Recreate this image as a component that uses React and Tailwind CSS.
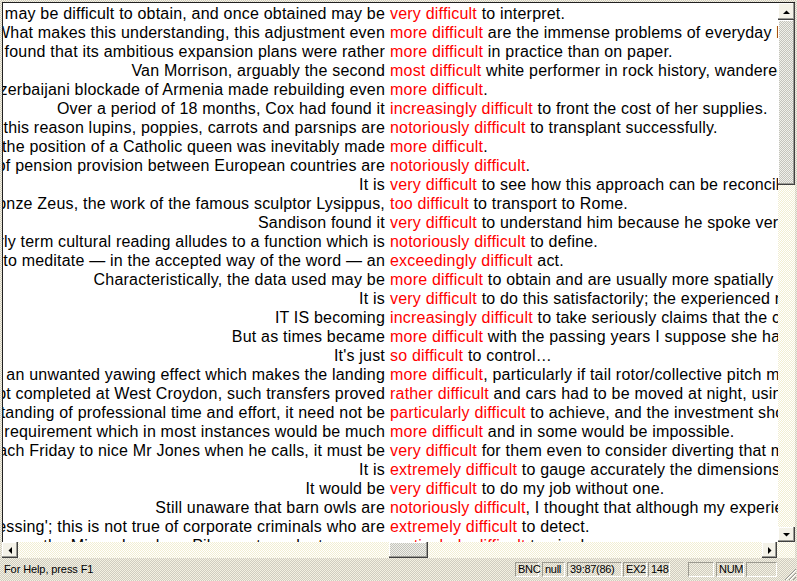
const ROWS = [
  ['tions may be difficult to obtain, and once obtained may be', 'very difficult', ' to interpret.'],
  ['What makes this understanding, this adjustment even', 'more difficult', ' are the immense problems of everyday life'],
  ['It found that its ambitious expansion plans were rather', 'more difficult', ' in practice than on paper.'],
  ['Van Morrison, arguably the second', 'most difficult', ' white performer in rock history, wandered'],
  ['The Azerbaijani blockade of Armenia made rebuilding even', 'more difficult', '.'],
  ['Over a period of 18 months, Cox had found it', 'increasingly difficult', ' to front the cost of her supplies.'],
  ['For this reason lupins, poppies, carrots and parsnips are', 'notoriously difficult', ' to transplant successfully.'],
  ['But the position of a Catholic queen was inevitably made', 'more difficult', '.'],
  ['levels of pension provision between European countries are', 'notoriously difficult', '.'],
  ['It is', 'very difficult', ' to see how this approach can be reconciled'],
  ['the bronze Zeus, the work of the famous sculptor Lysippus,', 'too difficult', ' to transport to Rome.'],
  ['Sandison found it', 'very difficult', ' to understand him because he spoke very'],
  ['The early term cultural reading alludes to a function which is', 'notoriously difficult', ' to define.'],
  ['is to meditate — in the accepted way of the word — an', 'exceedingly difficult', ' act.'],
  ['Characteristically, the data used may be', 'more difficult', ' to obtain and are usually more spatially'],
  ['It is', 'very difficult', ' to do this satisfactorily; the experienced reader'],
  ['IT IS becoming', 'increasingly difficult', ' to take seriously claims that the case'],
  ['But as times became', 'more difficult', ' with the passing years I suppose she had'],
  ["It's just", 'so difficult', ' to control…'],
  ['causes an unwanted yawing effect which makes the landing', 'more difficult', ', particularly if tail rotor/collective pitch movement'],
  ['Not completed at West Croydon, such transfers proved', 'rather difficult', ' and cars had to be moved at night, using'],
  ['understanding of professional time and effort, it need not be', 'particularly difficult', ' to achieve, and the investment should'],
  ['a requirement which in most instances would be much', 'more difficult', ' and in some would be impossible.'],
  ['each Friday to nice Mr Jones when he calls, it must be', 'very difficult', ' for them even to consider diverting that money'],
  ['It is', 'extremely difficult', ' to gauge accurately the dimensions'],
  ['It would be', 'very difficult', ' to do my job without one.'],
  ['Still unaware that barn owls are', 'notoriously difficult', ', I thought that although my experience'],
  ["'pressing'; this is not true of corporate criminals who are", 'extremely difficult', ' to detect.'],
  ['editor on the Mirror, by whom Pilger set much store, was', 'particularly difficult', ' to pin down.'],
]

const BTN = 'bg-[#f4f2e8] shadow-[inset_-1px_-1px_#404040,inset_-2px_-2px_#9a9a94,inset_1px_1px_#ffffff] flex items-center justify-center'
const TRACK = 'bg-[repeating-conic-gradient(#ffffff_0_25%,#f2eed2_0_50%)] bg-[length:2px_2px]'
const THUMB = 'bg-[repeating-conic-gradient(#c4c4bc_0_25%,#f0f0ea_0_50%)] bg-[length:2px_2px] shadow-[inset_-1px_-1px_#404040,inset_-2px_-2px_#9a9a94,inset_1px_1px_#ffffff]'

function Arrow({ dir }) {
  const pts = {
    up: '0,4 7,4 3.5,0.5',
    down: '0,0 7,0 3.5,3.5',
    left: '4,0 4,7 0.5,3.5',
    right: '0,0 0,7 3.5,3.5',
  }[dir]
  const vertical = dir === 'up' || dir === 'down'
  return (
    <svg width={vertical ? 7 : 4} height={vertical ? 4 : 7} viewBox={vertical ? '0 0 7 4' : '0 0 4 7'}>
      <polygon points={pts} fill="#000" />
    </svg>
  )
}

function Pane({ w, ml = 0, children }) {
  return (
    <div
      className="h-[15px] shrink-0 border-t border-l border-[#9c9a90] border-b border-r border-b-white border-r-white pl-[2px] flex items-center text-[11px] tracking-[-0.3px] leading-none text-black whitespace-nowrap"
      style={{ width: w, marginLeft: ml }}
    >
      {children}
    </div>
  )
}

export default function App() {
  return (
    <div className="w-[797px] h-[581px] flex flex-col overflow-hidden bg-[repeating-conic-gradient(#cfccc0_0_25%,#f4f1e2_0_50%)] bg-[length:2px_2px] font-['Liberation_Sans',Arial,sans-serif]">
      <div className="flex-1 flex flex-col pt-[2px] pl-[2px] pr-[2px] min-h-0">
        <div className="flex-1 flex min-h-0 border-t border-l border-[#202020]">
          <div className="flex-1 min-w-0 bg-white overflow-hidden pt-[1px] text-[16px] tracking-[0.2px] leading-[19px] text-black">
            {ROWS.map(([left, kw, right], i) => (
              <div key={i} className="flex h-[19px] whitespace-pre">
                <div className="w-[382px] shrink-0 flex justify-end overflow-hidden">
                  <span className="shrink-0">{left}</span>
                </div>
                <div className="shrink-0 pl-[5px]">
                  <span className="text-[#ff0000]">{kw}</span>
                  <span>{right}</span>
                </div>
              </div>
            ))}
          </div>
          <div className="w-[17px] shrink-0 flex flex-col">
            <div className={`h-[17px] ${BTN}`}><Arrow dir="up" /></div>
            <div className={`h-[165px] ${THUMB}`} />
            <div className={`flex-1 ${TRACK}`} />
            <div className={`h-[15px] ${BTN}`}><Arrow dir="down" /></div>
          </div>
        </div>
        <div className="h-[16px] flex shrink-0">
          <div className="flex-1 flex">
            <div className={`w-[16px] ${BTN}`}><Arrow dir="left" /></div>
            <div className={`w-[371px] ${TRACK}`} />
            <div className={`w-[39px] ${THUMB}`} />
            <div className={`flex-1 ${TRACK}`} />
            <div className={`w-[15px] ${BTN}`}><Arrow dir="right" /></div>
          </div>
          <div className={`w-[18px] ${TRACK}`} />
        </div>
      </div>
      <div className="h-[23px] shrink-0 flex items-center">
        <div className="flex-1 pl-[4px] text-[11px] tracking-[-0.1px] text-black leading-none">For Help, press F1</div>
        <div className="flex items-center">
          <Pane w={24}>BNC</Pane>
          <Pane w={23} ml={3}>null</Pane>
          <Pane w={55} ml={2}>39:87(86)</Pane>
          <Pane w={24} ml={1}>EX2</Pane>
          <Pane w={22} ml={1}>148</Pane>
          <Pane w={26} ml={18}></Pane>
          <Pane w={28} ml={2}>NUM</Pane>
          <Pane w={31} ml={2}></Pane>
        </div>
        <div className="w-[20px] h-[23px] flex items-end justify-end">
          <svg width="14" height="14" viewBox="0 0 14 14">
            <line x1="13" y1="2" x2="2" y2="13" stroke="#9a9a94" strokeWidth="1" />
            <line x1="13" y1="6" x2="6" y2="13" stroke="#9a9a94" strokeWidth="1" />
            <line x1="13" y1="10" x2="10" y2="13" stroke="#9a9a94" strokeWidth="1" />
            <line x1="13" y1="3" x2="3" y2="13" stroke="#ffffff" strokeWidth="1" />
            <line x1="13" y1="7" x2="7" y2="13" stroke="#ffffff" strokeWidth="1" />
          </svg>
        </div>
      </div>
    </div>
  )
}
